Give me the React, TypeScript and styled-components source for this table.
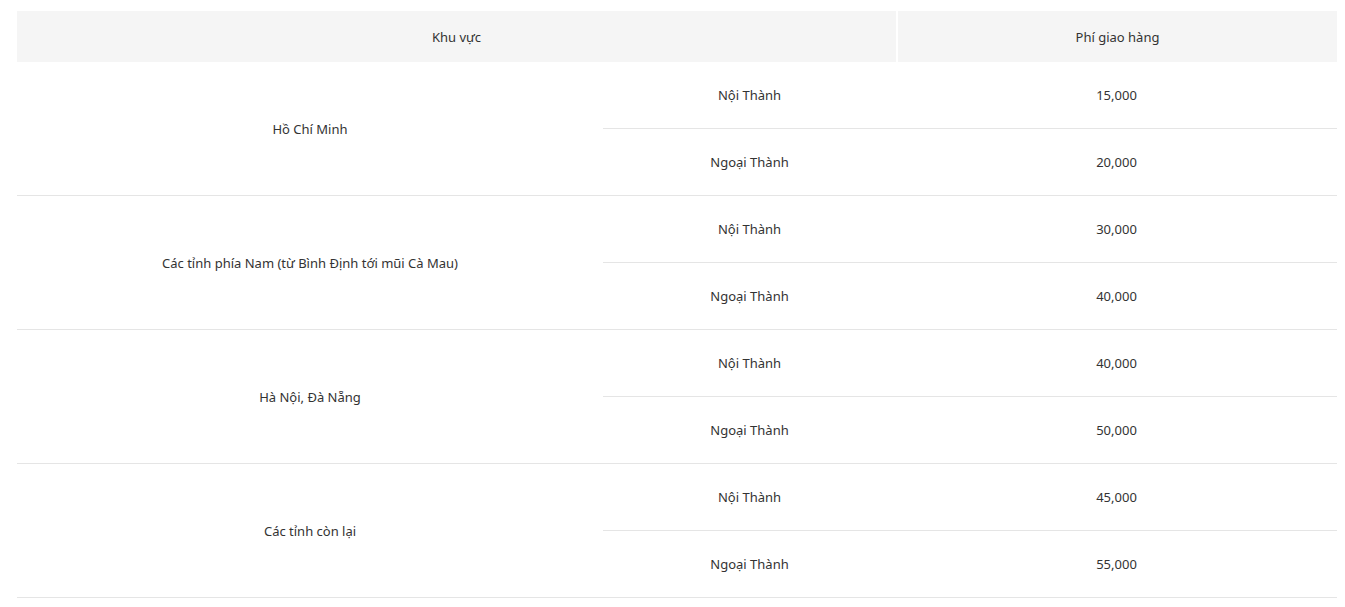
import styled, { createGlobalStyle } from 'styled-components';

const GlobalStyle = createGlobalStyle`
  body {
    margin: 0;
    background: #fff;
    font-family: "Noto Sans", "Open Sans", sans-serif;
    color: #333;
  }
`;

const Wrapper = styled.div`
  padding: 11px 0 0 17px;
`;

const Table = styled.table`
  width: 1320px;
  border-collapse: separate;
  border-spacing: 0;
  font-size: 13px;
  table-layout: fixed;
`;

const HeadCell = styled.th<{ $divider?: boolean }>`
  height: 51px;
  padding: 0;
  background: #f5f5f5;
  font-weight: 400;
  text-align: center;
  vertical-align: middle;
  border-left: ${({ $divider }) => ($divider ? '2px solid #fff' : 'none')};
`;

const Cell = styled.td`
  height: 66px;
  padding: 0;
  text-align: center;
  vertical-align: middle;
  border-bottom: 1px solid #e5e5e5;
`;

interface Zone {
  name: string;
  inner: string;
  outer: string;
}

const zones: Zone[] = [
  { name: 'Hồ Chí Minh', inner: '15,000', outer: '20,000' },
  { name: 'Các tỉnh phía Nam (từ Bình Định tới mũi Cà Mau)', inner: '30,000', outer: '40,000' },
  { name: 'Hà Nội, Đà Nẵng', inner: '40,000', outer: '50,000' },
  { name: 'Các tỉnh còn lại', inner: '45,000', outer: '55,000' },
];

const App: React.FC = () => {
  return (
    <Wrapper>
      <GlobalStyle />
      <Table>
        <colgroup>
          <col style={{ width: 586 }} />
          <col style={{ width: 293 }} />
          <col />
        </colgroup>
        <thead>
          <tr>
            <HeadCell colSpan={2}>Khu vực</HeadCell>
            <HeadCell $divider>Phí giao hàng</HeadCell>
          </tr>
        </thead>
        <tbody>
          {zones.map((z) => (
            <>
              <tr key={z.name + '-in'}>
                <Cell rowSpan={2}>{z.name}</Cell>
                <Cell>Nội Thành</Cell>
                <Cell>{z.inner}</Cell>
              </tr>
              <tr key={z.name + '-out'}>
                <Cell>Ngoại Thành</Cell>
                <Cell>{z.outer}</Cell>
              </tr>
            </>
          ))}
        </tbody>
      </Table>
    </Wrapper>
  );
};

export default App;
